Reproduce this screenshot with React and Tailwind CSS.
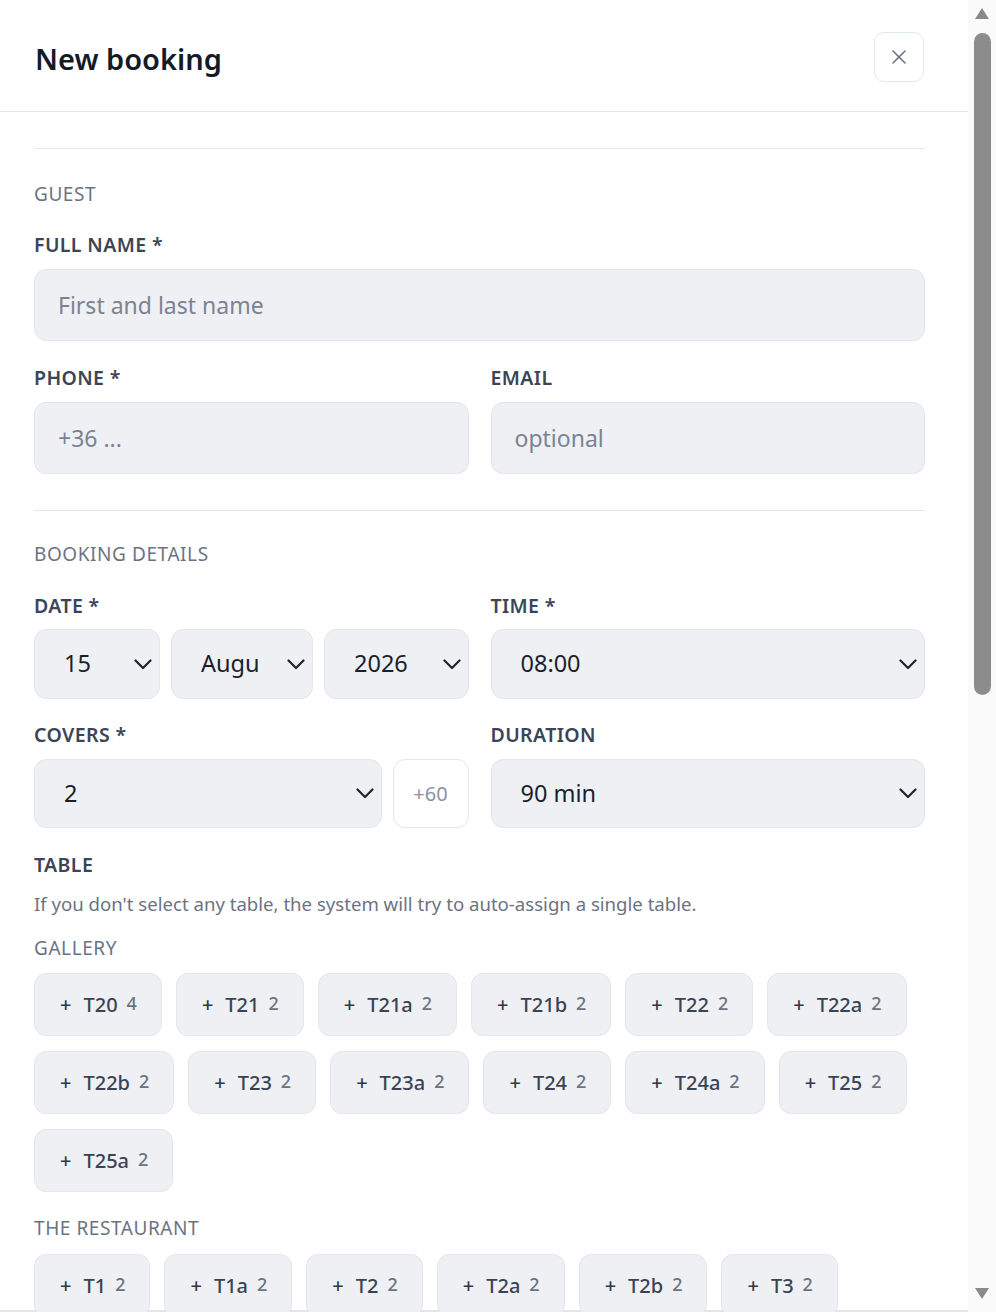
import React from 'react'

const gallery = [
  ['T20', 4], ['T21', 2], ['T21a', 2], ['T21b', 2], ['T22', 2], ['T22a', 2],
  ['T22b', 2], ['T23', 2], ['T23a', 2], ['T24', 2], ['T24a', 2], ['T25', 2],
  ['T25a', 2],
]

const restaurant = [
  ['T1', 2], ['T1a', 2], ['T2', 2], ['T2a', 2], ['T2b', 2], ['T3', 2],
]

function Chevron() {
  return (
    <svg width="18" height="11" viewBox="0 0 18 11" fill="none" stroke="#1f2330" strokeWidth="2.2" strokeLinecap="round" strokeLinejoin="round">
      <polyline points="1.5 1.5 9 9 16.5 1.5" />
    </svg>
  )
}

function Label({ children }) {
  return <div className="text-[19.5px] leading-6 font-semibold tracking-[0.02em] text-[#3b4556]">{children}</div>
}

function Section({ children }) {
  return <div className="text-[19px] leading-6 tracking-[0.03em] text-[#6b7383]">{children}</div>
}

function TextInput({ placeholder }) {
  return (
    <div className="h-[72px] rounded-[12px] border border-[#e3e6eb] bg-[#eef0f4] flex items-center px-[23px]">
      <span className="text-[23px] text-[#7b8393]">{placeholder}</span>
    </div>
  )
}

function Select({ value, className = '', h = 'h-[70px]' }) {
  return (
    <div className={`${h} ${className} rounded-[12px] border border-[#e3e6eb] bg-[#eef0f4] flex items-center justify-between pl-[29px] pr-[7px]`}>
      <span className="text-[23.5px] text-[#1a1f2b] whitespace-nowrap overflow-hidden">{value}</span>
      <Chevron />
    </div>
  )
}

function Chip({ name, seats }) {
  return (
    <div className="h-[63px] rounded-[12px] border border-[#e3e6eb] bg-[#eef0f4] flex items-center pl-[25px] pr-[24px]">
      <span className="text-[20px] font-medium text-[#2f3646]">+</span>
      <span className="ml-[12px] text-[20px] font-medium text-[#3a4354]">{name}</span>
      <span className="ml-[9px] text-[18px] font-medium text-[#6b7383] -mt-[3px]">{seats}</span>
    </div>
  )
}

export default function App() {
  return (
    <div className="h-[1312px] overflow-hidden flex bg-white font-['Noto_Sans',sans-serif]">
      <div className="flex-1 flex flex-col border-b-2 border-[#e2e4e8]">
        <div className="h-[112px] shrink-0 border-b border-[#e3e8ef] flex items-center justify-between pl-[35px] pr-[44px]">
          <h1 className="text-[29px] font-semibold text-[#141a26] mt-[6px]">New booking</h1>
          <button className="w-[50px] h-[50px] rounded-[10px] border border-[#e2e8f0] bg-white flex items-center justify-center mt-[3px]">
            <svg width="14" height="14" viewBox="0 0 14 14" stroke="#6a7585" strokeWidth="1.6" strokeLinecap="round">
              <line x1="1" y1="1" x2="13" y2="13" />
              <line x1="13" y1="1" x2="1" y2="13" />
            </svg>
          </button>
        </div>

        <div className="pl-[34px] pr-[43px] pt-[36px]">
          <div className="border-t border-[#e3e8ef]" />

          <div className="mt-[33px]"><Section>GUEST</Section></div>
          <div className="mt-[27px]"><Label>FULL NAME *</Label></div>
          <div className="mt-[12px]"><TextInput placeholder="First and last name" /></div>

          <div className="mt-[25px] grid grid-cols-2 gap-x-[22px]">
            <div>
              <Label>PHONE *</Label>
              <div className="mt-[12px]"><TextInput placeholder="+36 ..." /></div>
            </div>
            <div>
              <Label>EMAIL</Label>
              <div className="mt-[12px]"><TextInput placeholder="optional" /></div>
            </div>
          </div>

          <div className="mt-[36px] border-t border-[#e3e8ef]" />

          <div className="mt-[31px]"><Section>BOOKING DETAILS</Section></div>

          <div className="mt-[28px] grid grid-cols-2 gap-x-[22px]">
            <div>
              <Label>DATE *</Label>
              <div className="mt-[11px] flex gap-[11px]">
                <Select value="15" className="w-[126px]" />
                <Select value="Augu" className="w-[142px]" />
                <Select value="2026" className="flex-1" />
              </div>
            </div>
            <div>
              <Label>TIME *</Label>
              <div className="mt-[11px]"><Select value="08:00" /></div>
            </div>
          </div>

          <div className="mt-[24px] grid grid-cols-2 gap-x-[22px]">
            <div>
              <Label>COVERS *</Label>
              <div className="mt-[12px] flex gap-[11px]">
                <Select value="2" className="flex-1" h="h-[69px]" />
                <div className="w-[76px] h-[69px] rounded-[12px] border border-[#e3e6eb] bg-white flex items-center justify-center text-[20px] text-[#8a93a3]">+60</div>
              </div>
            </div>
            <div>
              <Label>DURATION</Label>
              <div className="mt-[12px]"><Select value="90 min" h="h-[69px]" /></div>
            </div>
          </div>

          <div className="mt-[25px]"><Label>TABLE</Label></div>
          <div className="mt-[15px] text-[18.6px] leading-6 text-[#6b7383]">
            If you don't select any table, the system will try to auto-assign a single table.
          </div>

          <div className="mt-[20px]"><Section>GALLERY</Section></div>
          <div className="mt-[13px] flex flex-wrap gap-x-[14px] gap-y-[15px]">
            {gallery.map(([n, s]) => <Chip key={n} name={n} seats={s} />)}
          </div>

          <div className="mt-[24px]"><Section>THE RESTAURANT</Section></div>
          <div className="mt-[14px] flex flex-wrap gap-x-[14px] gap-y-[15px]">
            {restaurant.map(([n, s]) => <Chip key={n} name={n} seats={s} />)}
          </div>
        </div>
      </div>

      <div className="w-[28px] shrink-0 bg-[#fafafa] flex flex-col items-center">
        <svg className="mt-[7px]" width="16" height="13" viewBox="0 0 16 13">
          <path d="M8 1 L15 12 L1 12 Z" fill="#8a8a8a" strokeLinejoin="round" />
        </svg>
        <div className="mt-[13px] w-[17px] h-[662px] rounded-full bg-[#8c8c8c]" />
        <div className="flex-1" />
        <svg className="mb-[12px]" width="16" height="13" viewBox="0 0 16 13">
          <path d="M1 1 L15 1 L8 12 Z" fill="#8a8a8a" />
        </svg>
      </div>
    </div>
  )
}
